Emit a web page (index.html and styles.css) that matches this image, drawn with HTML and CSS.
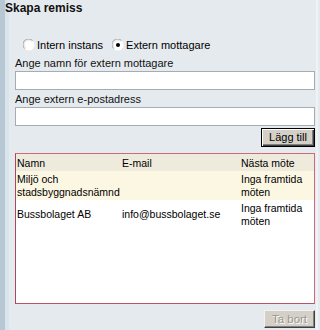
FILE: index.html
```html
<!DOCTYPE html>
<html lang="sv">
<head>
<meta charset="utf-8">
<title>Skapa remiss</title>
<link rel="stylesheet" href="styles.css">
</head>
<body>
<div class="page">
  <div class="title">Skapa remiss</div>
  <div class="form">
    <div class="radios">
      <label class="radio">
        <svg class="rb" width="12" height="12" viewBox="0 0 12 12">
          <circle cx="6" cy="6" r="5.5" fill="#fff"/>
          <path d="M1.6 9.5 A5 5 0 0 1 9.5 1.6" fill="none" stroke="#a0a0a0" stroke-width="1"/>
          <path d="M2.6 8.6 A3.8 3.8 0 0 1 8.6 2.6" fill="none" stroke="#e8e8e8" stroke-width="1"/>
        </svg>
        <span>Intern instans</span>
      </label>
      <label class="radio second">
        <svg class="rb" width="12" height="12" viewBox="0 0 12 12">
          <circle cx="6" cy="6" r="5.5" fill="#fff"/>
          <path d="M1.6 9.5 A5 5 0 0 1 9.5 1.6" fill="none" stroke="#a0a0a0" stroke-width="1"/>
          <path d="M2.6 8.6 A3.8 3.8 0 0 1 8.6 2.6" fill="none" stroke="#e8e8e8" stroke-width="1"/>
          <circle cx="6" cy="6" r="2" fill="#000"/>
        </svg>
        <span>Extern mottagare</span>
      </label>
    </div>
    <div class="label first">Ange namn för extern mottagare</div>
    <div class="input"></div>
    <div class="label">Ange extern e-postadress</div>
    <div class="input"></div>
    <div class="btnrow"><div class="btn add">Lägg till</div></div>
    <div class="listbox">
      <table class="grid">
        <colgroup><col class="c1"><col class="c2"><col class="c3"></colgroup>
        <tr class="head"><td>Namn</td><td>E-mail</td><td>Nästa möte</td></tr>
        <tr class="r1"><td>Miljö och stadsbyggnadsnämnd</td><td></td><td>Inga framtida möten</td></tr>
        <tr class="r2"><td>Bussbolaget AB</td><td>info@bussbolaget.se</td><td>Inga framtida möten</td></tr>
      </table>
    </div>
    <div class="btnrow"><div class="btn del">Ta bort</div></div>
  </div>
</div>
</body>
</html>
```

FILE: styles.css
```css
html, body {
  margin: 0;
  padding: 0;
  background: #e5eaee;
}
body {
  font-family: "Liberation Sans", Arial, sans-serif;
  color: #000;
}
.page {
  width: 320px;
  height: 329px;
  overflow: hidden;
  padding-top: 1px;
  background: linear-gradient(to right, #b7c7d3 0, #b7c7d3 5px, #d9e5ec 5px, #d9e5ec 9px, #e5eaee 9px, #e5eaee 316px, #eef3f6 316px, #eef3f6 318px, #e5eaee 318px);
}
.title {
  font-weight: bold;
  font-size: 12px;
  line-height: 15px;
  padding-left: 5px;
  color: #111;
  height: 16px;
}
.form {
  margin-left: 15px;
  width: 300px;
}
.radios {
  margin-top: 22px;
  display: flex;
  align-items: center;
  font-size: 11px;
  line-height: 13px;
  height: 13px;
  padding-left: 8px;
}
.radio {
  display: flex;
  align-items: center;
}
.radio .rb {
  margin-right: 2px;
  margin-top: -2px;
}
.radio.second {
  margin-left: 9px;
}
.label {
  font-size: 11px;
  line-height: 13px;
  height: 13px;
  margin-top: 3px;
  color: #111;
}
.label.first {
  margin-top: 5px;
}
.input {
  height: 17px;
  background: #fff;
  border: 1px solid #a5acb2;
  margin-top: 1px;
}
.btnrow {
  display: flex;
  justify-content: flex-end;
}
.btn {
  font-size: 11px;
  line-height: 17px;
  height: 17px;
  background: #d4d0c8;
  text-align: center;
  box-sizing: content-box;
}
.btn.add {
  margin-top: 2px;
  width: 52px;
  border: 1px solid #000;
  box-shadow: inset 1px 1px 0 #fff, inset -1px -1px 0 #404040, inset -2px -2px 0 #808080;
}
.btn.del {
  margin-top: 6px;
  width: 49px;
  height: 16px;
  line-height: 17px;
  font-size: 11.5px;
  border: 1px solid;
  border-color: #f4f2ee #404040 #404040 #f4f2ee;
  box-shadow: inset -1px -1px 0 #808080;
  color: #99968e;
  text-shadow: 1px 1px 0 #fff;
}
.listbox {
  margin-top: 6px;
  height: 149px;
  border: 1px solid #cf6a7c;
  border-left-color: #a44a5a;
  border-bottom-color: #b85466;
  background: #fff;
}
.grid {
  border-collapse: collapse;
  width: 298px;
  table-layout: fixed;
  font-size: 10.5px;
  line-height: 13px;
}
.c1 { width: 105px; }
.c2 { width: 119px; }
.c3 { width: 74px; }
.grid td {
  padding: 0 1px 0 1px;
  vertical-align: middle;
}
.grid tr.head td {
  height: 16px;
  background: #efebdc;
  padding-top: 1px;
}
.grid tr.r1 td {
  background: #fcf7e3;
  height: 29px;
}
.grid tr.r2 td {
  background: #fff;
  height: 29px;
}
```
